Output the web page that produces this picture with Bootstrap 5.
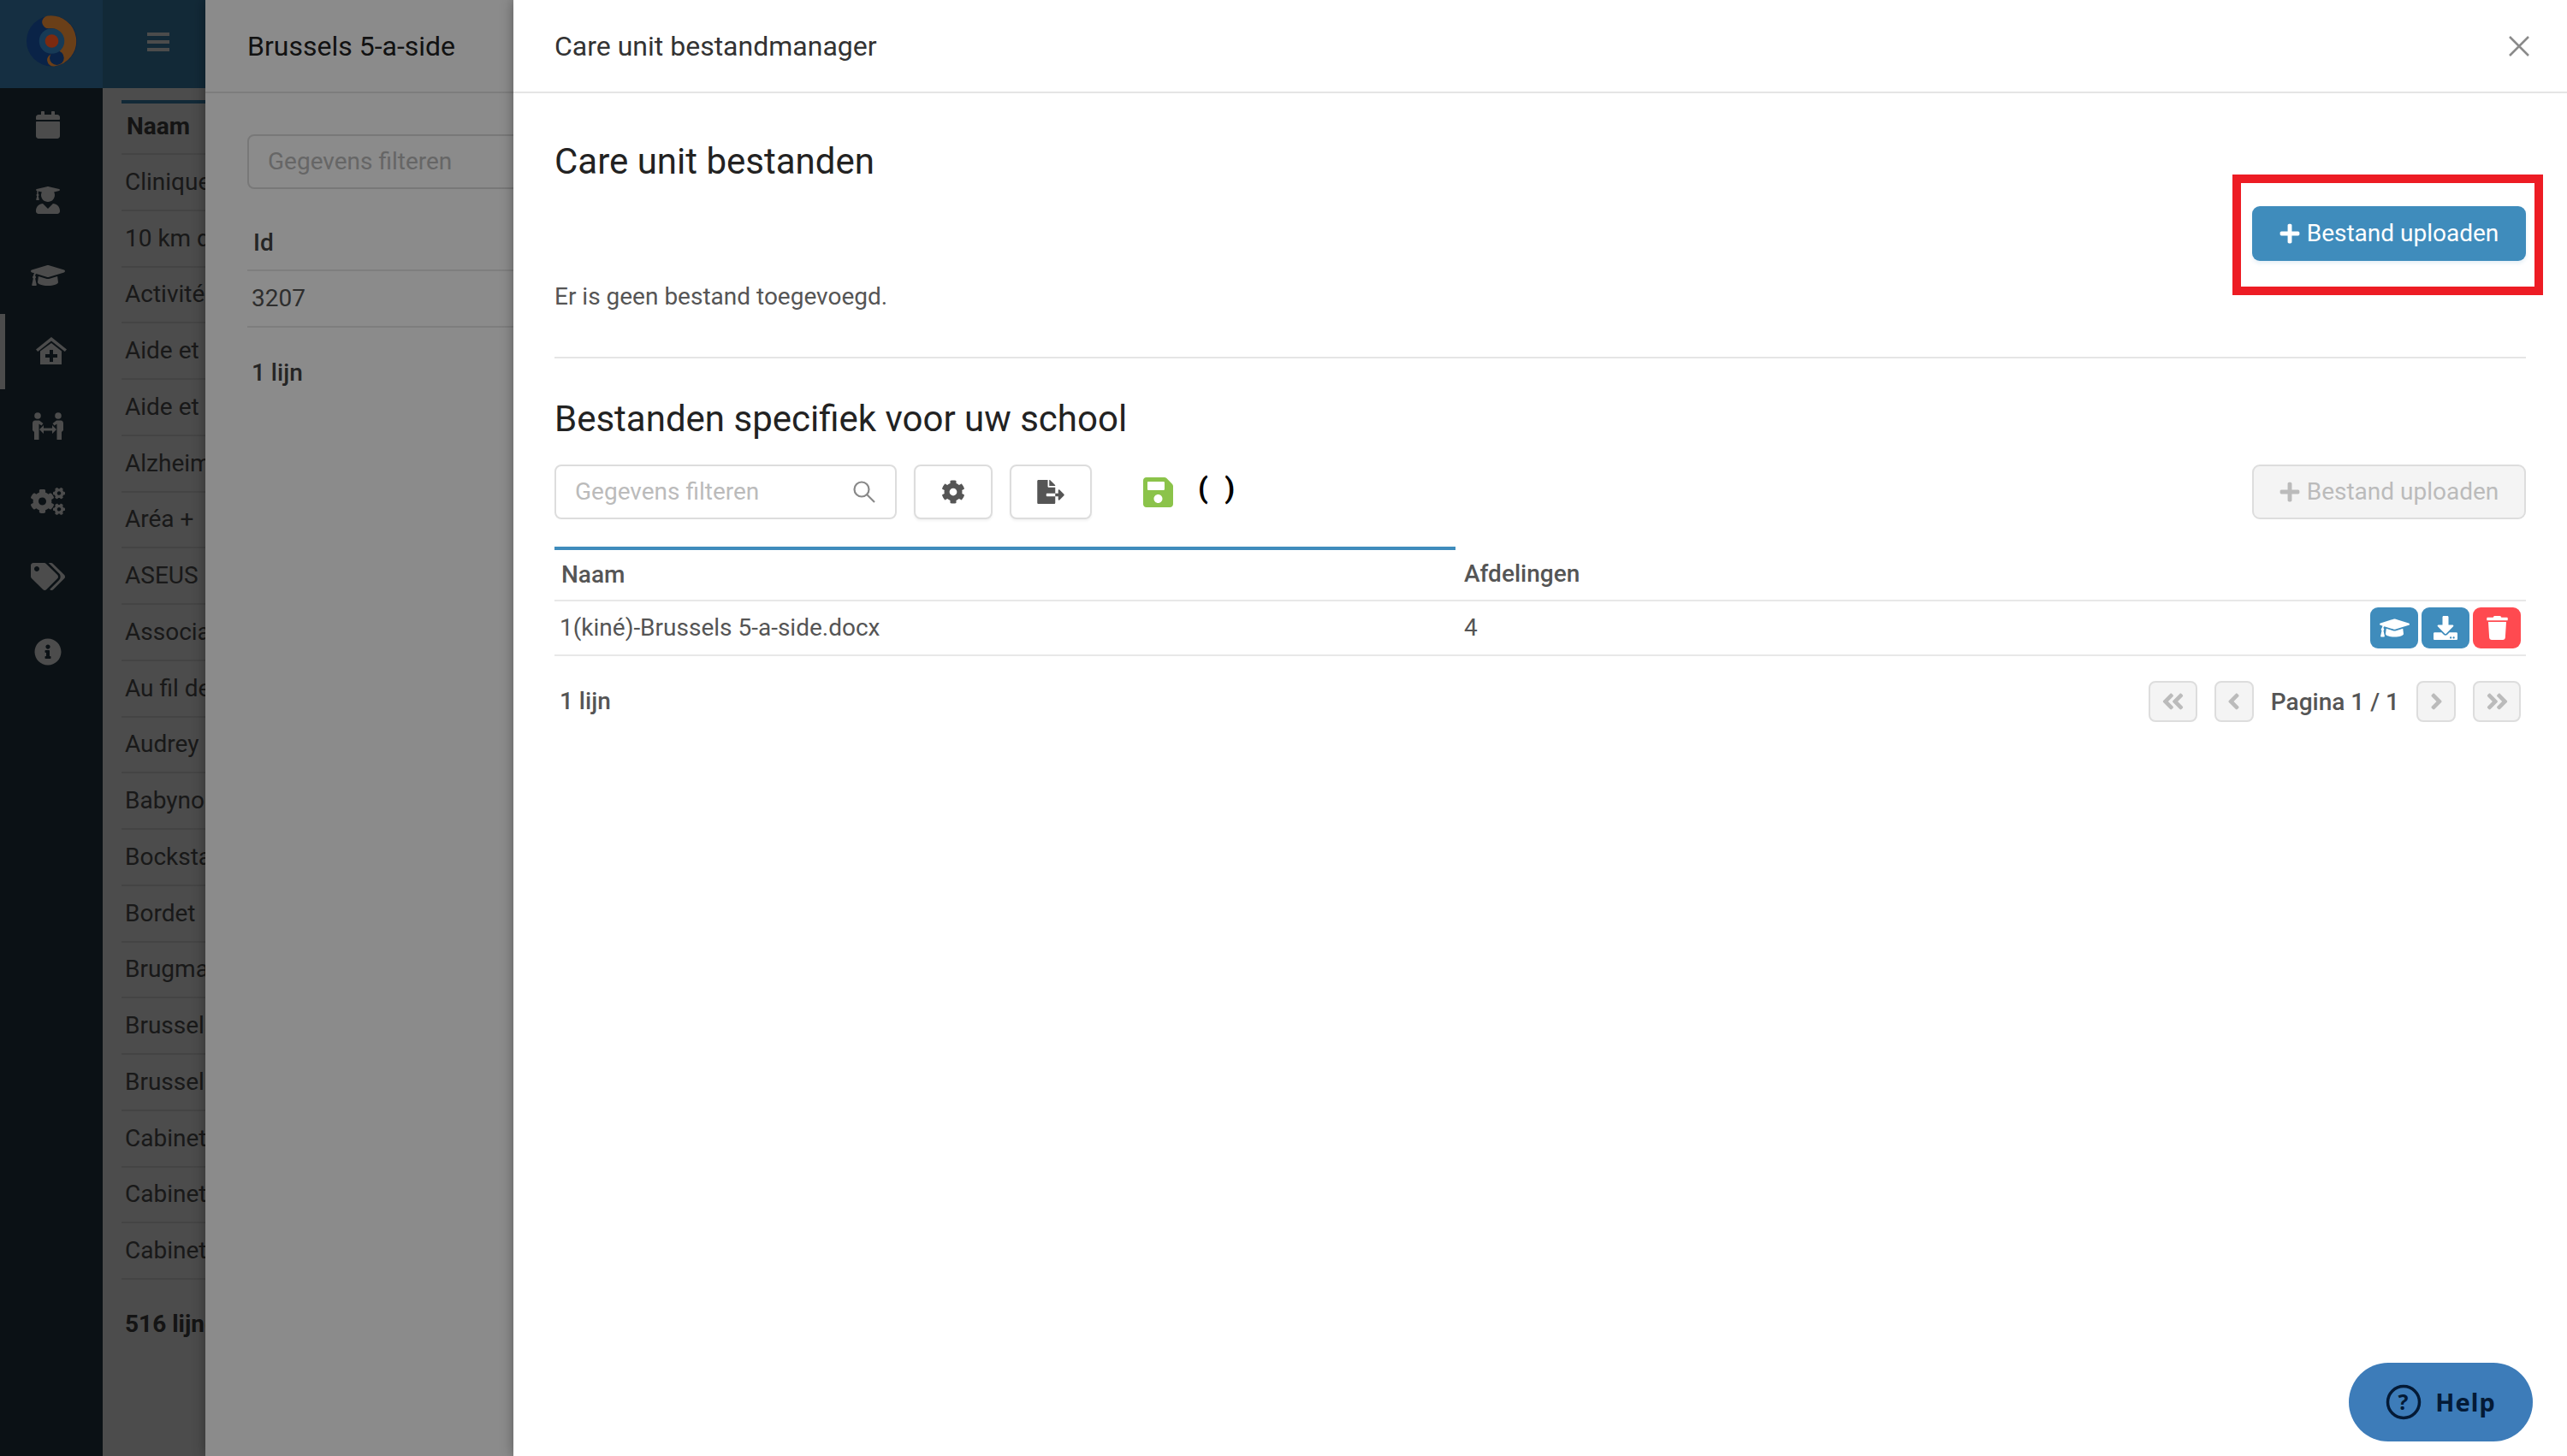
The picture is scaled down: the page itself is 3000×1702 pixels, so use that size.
<!DOCTYPE html>
<html lang="nl">
<head>
<meta charset="utf-8">
<title>Care unit bestandmanager</title>
<link href="https://cdn.jsdelivr.net/npm/bootstrap@5.3.0/dist/css/bootstrap.min.css" rel="stylesheet">
<script src="https://cdn.jsdelivr.net/npm/bootstrap@5.3.0/dist/js/bootstrap.bundle.min.js"></script>
<style>
html,body{height:100%;margin:0;overflow:hidden}
body{font-family:Roboto,"Liberation Sans",sans-serif;font-size:28px;color:#555;background:#fff}
.stage{position:relative;width:3000px;height:1702px;overflow:hidden}
.ico{fill:currentColor;display:block}
.topbar-brand{width:120px;height:103px;background:#152f42;position:relative;z-index:1;padding:0 30px 7px 31px}
.topbar-rest{height:103px;background:#3f8cbc;color:#fff;padding:0 0 5px 52px}
.rail{width:120px;background:#283c49;color:#fff;position:relative}
.rail-item{height:88px;color:#fff}
.rail-slot{width:112px}
.rail-active{position:absolute;left:0;top:264px;width:6px;height:88px;background:#fff}
.rail-list{margin-top:-1px}
.back-table{margin:14px 0 0 22px;width:700px}
.back-head{border-top:4px solid #3f8cbc;height:64px;font-weight:700;color:#444;font-size:28px;padding:0 0 4px 6px;border-bottom:2px solid #e8e8e8}
.back-row{height:65.75px;padding-left:4px;border-bottom:2px solid #e8e8e8;white-space:nowrap}
.back-foot{font-weight:700;padding:31px 0 0 4px;color:#444}
.veil{position:absolute;inset:0;background:rgba(0,0,0,.455)}
.drawer{position:absolute;top:0;bottom:0;left:240px;right:0;background:#fff;box-shadow:0 0 14px rgba(0,0,0,.35)}
.dialog{position:absolute;top:0;bottom:0;left:600px;right:0;background:#fff;box-shadow:0 0 14px rgba(0,0,0,.35)}
.drawer-head{height:109px;padding-left:49px;border-bottom:2px solid #e5e5e5;font-size:32px;color:#222}
.drawer-body{padding:48px 48px 0 49px}
.filter-box{height:64px;border:2px solid #ddd;border-radius:8px;padding:0 22px;color:#bbb;font-size:28px;background:#fff}
.drawer-id{height:96px;border-bottom:2px solid #e8e8e8;padding:0 0 10px 7px;font-weight:500;color:#444}
.drawer-val{height:66px;border-bottom:2px solid #e8e8e8;padding-left:5px}
.drawer-foot{font-weight:500;padding:32px 0 0 5px;color:#444}
.dialog-head{height:109px;padding:0 44px 0 48px;border-bottom:2px solid #e5e5e5;font-size:32px;color:#333}
.dialog-close{background:none;border:0;padding:0;color:#8a8a8a;line-height:0}
.dialog-body{padding:0 48px}
.sec-title{font-size:42px;color:#222;font-weight:400;line-height:48px;margin:0}
.first-block{height:310px;border-bottom:2px solid #e5e5e5;position:relative}
.first-title{padding-top:56px}
.first-action{justify-content:flex-end;margin-top:28px;height:64px}
.first-note{margin-top:24px;line-height:36px;color:#555}
.upload-btn{width:320px;height:64px;background:#3f8cbc;border:0;border-radius:9px;color:#fff;font-size:28px;padding:0;box-shadow:0 3px 4px rgba(63,140,188,.12)}
.upload-btn:disabled{background:#f4f4f4;border:2px solid #ddd;color:#bbb;opacity:1;box-shadow:none}
.callout{position:absolute;left:1961px;top:95px;width:363px;height:141px;border:10px solid #ed1c24;pointer-events:none}
.second-title{padding-top:47px}
.tools{margin-top:29px;height:64px}
.filter-wide{width:400px}
.tool-btn{height:64px;border:2px solid #ddd;border-radius:8px;background:#fff;color:#555;padding:0;box-shadow:0 2px 3px rgba(0,0,0,.05)}
.tool-gear{width:92px;margin-left:20px}
.tool-file{width:96px;margin-left:20px}
.save-ico{color:#8bc34a;margin-left:60px}
.paren-txt{font-size:34px;font-weight:700;color:#000;margin-left:29px;word-spacing:11px;line-height:1;margin-top:-10px}
.files{margin:32px 0 0;width:100%;table-layout:fixed;border-collapse:collapse}
.files th{height:61px;border-top:4px solid #3f8cbc;border-bottom:2px solid #e8e8e8;font-weight:500;color:#555;padding:0 0 0 8px;background:none;box-shadow:none;vertical-align:middle}
.files th+th{border-top:0;padding-left:10px}
.files td{height:64px;border-bottom:2px solid #e8e8e8;color:#555;padding:0 0 0 6px;background:none;box-shadow:none;vertical-align:middle}
.files td+td{padding-left:10px}
.files td.acts{padding:0 6px 0 0}
.act-btn{width:56px;height:48px;border:0;border-radius:9px;background:#3f8cbc;color:#fff;padding:0}
.act-del{background:#ff4a50}
.table-foot{margin-top:29px;height:48px;padding:0 6px}
.count-txt{font-weight:500;color:#555}
.pg-btn{height:48px;border:2px solid #ddd;border-radius:8px;background:#f4f4f4;color:#bbb;padding:0}
.pg-btn:disabled{background:#f4f4f4;border-color:#ddd;color:#bbb;opacity:1}
.pg-w1{width:57px;margin-right:20px}
.pg-w2{width:46px}
.pg-w2b{width:46px;margin-right:20px}
.pg-w3{width:56px}
.pg-label{font-size:28px;font-weight:500;color:#555;margin:2px 20px 0 20px;white-space:nowrap}
.help-pill{position:absolute;left:2745px;top:1593px;width:215px;height:92px;border-radius:46px;background:#3d7cb9;color:#041a36;font-family:"Noto Sans",sans-serif;font-weight:700;font-size:29px;letter-spacing:1px}
.help-pill svg{margin-right:16px;fill:currentColor}
</style>
</head>
<body>
<div class="stage">
  <div class="d-flex flex-column h-100">
    <div class="d-flex">
      <div class="topbar-brand d-flex align-items-center justify-content-center">
        <svg width="59" height="60" viewBox="0 0 60 60"><circle cx="30" cy="30" r="30" fill="#0a2347"/><path d="M26 7.500A22.500 22.500 0 1 1 32 52.500" fill="none" stroke="#6a3f18" stroke-width="15" stroke-linecap="round"/><circle cx="36" cy="50" r="8.500" fill="#0a2347"/><circle cx="30" cy="30" r="15" fill="#173a56"/><circle cx="30" cy="30" r="8" fill="#7c2a10"/></svg>
      </div>
      <div class="topbar-rest flex-grow-1 d-flex align-items-center">
        <svg width="26" height="22" viewBox="0 0 26 22" class="ico"><rect width="26" height="4"/><rect y="9" width="26" height="4"/><rect y="18" width="26" height="4"/></svg>
      </div>
    </div>
    <div class="d-flex flex-grow-1">
      <nav class="rail">
        <div class="rail-active"></div>
        <div class="rail-list">
          <div class="rail-item rail-slot d-flex align-items-center justify-content-center"><svg class="ico" width="28" height="32" viewBox="0 0 448 512"><path d="M12 192h424c6.6 0 12 5.4 12 12v260c0 26.5-21.5 48-48 48H48c-26.5 0-48-21.5-48-48V204c0-6.6 5.4-12 12-12zm436-44v-36c0-26.5-21.5-48-48-48h-48V12c0-6.6-5.4-12-12-12h-40c-6.6 0-12 5.4-12 12v52H160V12c0-6.6-5.4-12-12-12h-40c-6.6 0-12 5.4-12 12v52H48C21.5 64 0 85.5 0 112v36c0 6.6 5.4 12 12 12h424c6.6 0 12-5.4 12-12z"/></svg></div>
          <div class="rail-item rail-slot d-flex align-items-center justify-content-center"><svg class="ico" width="28" height="32" viewBox="0 0 448 512"><path d="M319.4 320.6L224 416l-95.4-95.4C57.1 323.7 0 382.2 0 454.4v9.6c0 26.5 21.5 48 48 48h352c26.5 0 48-21.5 48-48v-9.6c0-72.2-57.1-130.7-128.6-133.8zM13.6 79.8l6.4 1.5v58.4c-7 4.2-12 11.5-12 20.3 0 8.4 4.6 15.4 11.1 19.7L3.5 242c-1.7 6.9 2.1 14 7.6 14h41.8c5.5 0 9.3-7.1 7.6-14l-15.6-62.3C51.4 175.4 56 168.4 56 160c0-8.8-5-16.1-12-20.3V87.1l66 15.9c-8.6 17.2-14 36.4-14 57 0 70.7 57.3 128 128 128s128-57.3 128-128c0-20.6-5.3-39.8-14-57l96.3-23.2c18.2-4.4 18.2-27.1 0-31.5l-190.4-46c-13-3.1-26.7-3.1-39.7 0L13.6 48.2c-18.1 4.4-18.1 27.2 0 31.6z"/></svg></div>
          <div class="rail-item rail-slot d-flex align-items-center justify-content-center"><svg class="ico" width="40" height="32" viewBox="0 0 640 512"><path d="M622.34 153.2L343.4 67.5c-15.2-4.67-31.6-4.67-46.79 0L17.66 153.2c-23.54 7.23-23.54 38.36 0 45.59l48.63 14.94c-10.67 13.19-17.23 29.28-17.88 46.9C38.78 266.15 32 276.11 32 288c0 10.78 5.68 19.85 13.86 25.65L20.33 428.53C18.11 438.52 25.71 448 35.94 448h56.11c10.24 0 17.84-9.48 15.62-19.47L82.14 313.65C90.32 307.85 96 298.78 96 288c0-11.57-6.47-21.25-15.66-26.87.76-15.02 8.44-28.3 20.69-36.72L296.6 284.5c9.06 2.78 26.44 6.25 46.79 0l278.95-85.7c23.55-7.24 23.55-38.36 0-45.6zM352.79 315.09c-28.53 8.76-52.84 3.92-65.59 0l-145.02-44.55L128 384c0 35.35 85.96 64 192 64s192-28.65 192-64l-14.18-113.47-145.03 44.56z"/></svg></div>
          <div class="rail-item d-flex align-items-center justify-content-center"><svg class="ico" width="36" height="32" viewBox="0 0 36 32"><path d="M18 0L36 14.500 33.800 17 18 4.600 2.200 17 0 14.500z"/><path d="M18 7L30 16.500V32H5V16.500zM16 15v5h-5v4h5v5h4v-5h5v-4h-5v-5z" fill-rule="evenodd"/></svg></div>
          <div class="rail-item rail-slot d-flex align-items-center justify-content-center"><svg class="ico" width="36" height="32" viewBox="0 0 36 32"><circle cx="6" cy="4" r="3.800"/><circle cx="30" cy="4" r="3.800"/><path d="M3 9.500h5l4.500 3.500-2 2.500-3-2V32H2V23L0 21v-8a3.500 3.500 0 0 1 3-3.500z"/><path d="M33 9.500h-5l-4.500 3.500 2 2.500 3-2V32h5.500V23l2-2v-8a3.500 3.500 0 0 0-3-3.500z"/><path d="M8 20l5-5v3.500h10V15l5 5-5 5v-3.500H13V25z"/></svg></div>
          <div class="rail-item rail-slot d-flex align-items-center justify-content-center"><svg class="ico" width="40" height="32" viewBox="0 0 640 512"><path d="M512.100 191l-8.200 14.300c-3 5.300-9.400 7.500-15.100 5.400-11.800-4.400-22.600-10.700-32.100-18.600-4.600-3.800-5.800-10.500-2.800-15.700l8.200-14.300c-6.900-8-12.300-17.300-15.900-27.400h-16.500c-6 0-11.200-4.300-12.200-10.300-2-12-2.100-24.600 0-37.100 1-6 6.200-10.400 12.200-10.400h16.500c3.600-10.100 9-19.400 15.900-27.400l-8.200-14.300c-3-5.200-1.900-11.900 2.800-15.700 9.500-7.900 20.400-14.200 32.100-18.600 5.700-2.100 12.100.1 15.100 5.400l8.200 14.300c10.500-1.900 21.200-1.900 31.700 0L552 6.300c3-5.300 9.400-7.500 15.100-5.400 11.800 4.400 22.600 10.700 32.100 18.600 4.600 3.800 5.800 10.500 2.800 15.700l-8.200 14.300c6.900 8 12.300 17.300 15.900 27.400h16.500c6 0 11.200 4.300 12.200 10.300 2 12 2.100 24.600 0 37.100-1 6-6.200 10.400-12.200 10.400h-16.500c-3.600 10.100-9 19.400-15.900 27.400l8.200 14.300c3 5.200 1.900 11.900-2.800 15.700-9.500 7.900-20.400 14.200-32.100 18.600-5.700 2.100-12.100-.1-15.100-5.400l-8.200-14.300c-10.400 1.900-21.200 1.900-31.700 0zm-10.500-58.800c38.500 29.600 82.400-14.300 52.800-52.800-38.500-29.700-82.400 14.300-52.800 52.800zM386.300 286.100l33.700 16.800c10.100 5.800 14.500 18.100 10.500 29.100-8.900 24.200-26.400 46.400-42.600 65.800-7.400 8.900-20.200 11.100-30.300 5.300l-29.100-16.800c-16 13.700-34.600 24.600-54.900 31.700v33.600c0 11.600-8.300 21.600-19.700 23.600-24.600 4.200-50.400 4.400-75.900 0-11.500-2-20-11.900-20-23.600V418c-20.300-7.200-38.900-18-54.900-31.700L74 403c-10 5.800-22.900 3.600-30.300-5.300-16.200-19.400-33.300-41.600-42.200-65.700-4-10.900.4-23.200 10.500-29.100l33.300-16.800c-3.900-20.900-3.900-42.400 0-63.400L12 205.800c-10.100-5.800-14.600-18.100-10.500-29 8.900-24.200 26-46.400 42.200-65.800 7.400-8.900 20.200-11.100 30.300-5.300l29.100 16.800c16-13.700 34.600-24.600 54.900-31.700V57.100c0-11.500 8.200-21.500 19.600-23.500 24.600-4.200 50.500-4.400 76-.1 11.500 2 20 11.900 20 23.600v33.600c20.300 7.200 38.900 18 54.900 31.700l29.100-16.800c10-5.800 22.900-3.600 30.300 5.300 16.200 19.400 33.200 41.600 42.100 65.800 4 10.900.1 23.200-10 29.100l-33.700 16.800c3.900 21 3.900 42.500 0 63.500zm-117.600 21.100c59.200-77-28.700-164.900-105.700-105.700-59.200 77 28.700 164.900 105.700 105.700zm243.400 182.700l-8.200 14.300c-3 5.300-9.400 7.500-15.100 5.400-11.800-4.400-22.600-10.700-32.100-18.600-4.600-3.800-5.800-10.500-2.800-15.700l8.200-14.300c-6.900-8-12.300-17.300-15.900-27.400h-16.500c-6 0-11.200-4.300-12.200-10.300-2-12-2.100-24.600 0-37.100 1-6 6.200-10.400 12.200-10.400h16.500c3.600-10.100 9-19.400 15.900-27.400l-8.200-14.300c-3-5.200-1.900-11.900 2.800-15.700 9.500-7.900 20.400-14.200 32.100-18.600 5.700-2.100 12.100.1 15.100 5.400l8.200 14.300c10.500-1.900 21.200-1.900 31.700 0l8.200-14.300c3-5.300 9.400-7.500 15.100-5.400 11.800 4.400 22.600 10.700 32.100 18.600 4.600 3.800 5.800 10.500 2.800 15.700l-8.200 14.300c6.900 8 12.300 17.300 15.900 27.400h16.500c6 0 11.200 4.300 12.200 10.300 2 12 2.100 24.600 0 37.100-1 6-6.200 10.400-12.200 10.400h-16.500c-3.600 10.100-9 19.400-15.900 27.400l8.200 14.300c3 5.200 1.900 11.900-2.800 15.700-9.500 7.900-20.400 14.200-32.100 18.600-5.700 2.100-12.100-.1-15.100-5.400l-8.200-14.300c-10.400 1.900-21.200 1.900-31.700 0zM501.600 431c38.500 29.600 82.400-14.300 52.800-52.800-38.500-29.600-82.400 14.300-52.800 52.800z"/></svg></div>
          <div class="rail-item rail-slot d-flex align-items-center justify-content-center"><svg class="ico" width="40" height="32" viewBox="0 0 640 512"><path d="M497.941 225.941L286.059 14.059A48 48 0 0 0 252.118 0H48C21.49 0 0 21.49 0 48v204.118a48 48 0 0 0 14.059 33.941l211.882 211.882c18.744 18.745 49.136 18.746 67.882 0l204.118-204.118c18.745-18.745 18.745-49.137 0-67.882zM112 160c-26.51 0-48-21.49-48-48s21.49-48 48-48 48 21.49 48 48-21.49 48-48 48zm513.941 133.823L421.823 497.941c-18.745 18.745-49.137 18.745-67.882 0l-.36-.36L527.64 323.522c16.999-16.999 26.36-39.6 26.36-63.64s-9.362-46.641-26.36-63.64L331.397 0h48.721a48 48 0 0 1 33.941 14.059l211.882 211.882c18.745 18.745 18.745 49.137 0 67.882z"/></svg></div>
          <div class="rail-item rail-slot d-flex align-items-center justify-content-center"><svg class="ico" width="32" height="32" viewBox="0 0 512 512"><path d="M256 8C119.043 8 8 119.083 8 256c0 136.997 111.043 248 248 248s248-111.003 248-248C504 119.083 392.957 8 256 8zm0 110c23.196 0 42 18.804 42 42s-18.804 42-42 42-42-18.804-42-42 18.804-42 42-42zm56 254c0 6.627-5.373 12-12 12h-88c-6.627 0-12-5.373-12-12v-24c0-6.627 5.373-12 12-12h12v-64h-12c-6.627 0-12-5.373-12-12v-24c0-6.627 5.373-12 12-12h64c6.627 0 12 5.373 12 12v100h12c6.627 0 12 5.373 12 12v24z"/></svg></div>
        </div>
      </nav>
      <main class="flex-grow-1">
        <div class="back-table">
          <div class="back-head d-flex align-items-center">Naam</div>
          <div class="back-row d-flex align-items-center">Clinique</div>
          <div class="back-row d-flex align-items-center">10 km de</div>
          <div class="back-row d-flex align-items-center">Activité</div>
          <div class="back-row d-flex align-items-center">Aide et soins</div>
          <div class="back-row d-flex align-items-center">Aide et soins</div>
          <div class="back-row d-flex align-items-center">Alzheimer</div>
          <div class="back-row d-flex align-items-center">Aréa +</div>
          <div class="back-row d-flex align-items-center">ASEUS</div>
          <div class="back-row d-flex align-items-center">Association</div>
          <div class="back-row d-flex align-items-center">Au fil de</div>
          <div class="back-row d-flex align-items-center">Audrey</div>
          <div class="back-row d-flex align-items-center">Babynoo</div>
          <div class="back-row d-flex align-items-center">Bockstael</div>
          <div class="back-row d-flex align-items-center">Bordet</div>
          <div class="back-row d-flex align-items-center">Brugmann</div>
          <div class="back-row d-flex align-items-center">Brussels</div>
          <div class="back-row d-flex align-items-center">Brussels</div>
          <div class="back-row d-flex align-items-center">Cabinet</div>
          <div class="back-row d-flex align-items-center">Cabinet</div>
          <div class="back-row d-flex align-items-center">Cabinet</div>
          <div class="back-foot">516 lijnen</div>
        </div>
      </main>
    </div>
  </div>

  <div class="veil"></div>

  <aside class="drawer">
    <div class="drawer-head d-flex align-items-center">Brussels 5-a-side</div>
    <div class="drawer-body">
      <div class="filter-box d-flex align-items-center">Gegevens filteren</div>
      <div class="drawer-id d-flex align-items-end">Id</div>
      <div class="drawer-val d-flex align-items-center">3207</div>
      <div class="drawer-foot">1 lijn</div>
    </div>
  </aside>

  <div class="veil"></div>

  <section class="dialog">
    <header class="dialog-head d-flex align-items-center justify-content-between">
      <span>Care unit bestandmanager</span>
      <button class="dialog-close" aria-label="Sluiten"><svg width="24" height="24" viewBox="0 0 24 24"><path d="M1 1l22 22M23 1L1 23" stroke="currentColor" stroke-width="2.500" fill="none"/></svg></button>
    </header>
    <div class="dialog-body">
      <div class="first-block">
        <h2 class="sec-title first-title">Care unit bestanden</h2>
        <div class="d-flex first-action">
          <button class="btn upload-btn d-flex align-items-center justify-content-center gap-2"><svg class="ico" width="24" height="26" viewBox="0 0 448 512"><path d="M416 208H272V64c0-17.670-14.330-32-32-32h-32c-17.670 0-32 14.330-32 32v144H32c-17.670 0-32 14.330-32 32v32c0 17.670 14.330 32 32 32h144v144c0 17.670 14.330 32 32 32h32c17.670 0 32-14.330 32-32V304h144c17.670 0 32-14.330 32-32v-32c0-17.670-14.330-32-32-32z"/></svg>Bestand uploaden</button>
        </div>
        <p class="first-note mb-0">Er is geen bestand toegevoegd.</p>
        <div class="callout"></div>
      </div>
      <h2 class="sec-title second-title">Bestanden specifiek voor uw school</h2>
      <div class="d-flex align-items-center tools">
        <div class="filter-box filter-wide d-flex align-items-center justify-content-between">
          <span>Gegevens filteren</span>
          <svg width="28" height="28" viewBox="0 0 28 28" fill="none" stroke="#888" stroke-width="2.200"><circle cx="11" cy="11" r="8.500"/><path d="M17 17l9 9"/></svg>
        </div>
        <button class="btn tool-btn tool-gear d-flex align-items-center justify-content-center"><svg class="ico" width="28" height="28" viewBox="0 0 512 512"><path d="M487.400 315.700l-42.600-24.600c4.300-23.200 4.300-47 0-70.200l42.600-24.600c4.900-2.800 7.100-8.600 5.500-14-11.100-35.600-30-67.800-54.700-94.600-3.800-4.100-10-5.100-14.800-2.300L380.800 110c-17.900-15.400-38.500-27.300-60.800-35.100V25.800c0-5.600-3.900-10.500-9.400-11.700-36.700-8.200-74.300-7.800-109.200 0-5.500 1.200-9.400 6.100-9.400 11.700V75c-22.200 7.900-42.800 19.800-60.800 35.100L88.700 85.500c-4.900-2.800-11-1.900-14.800 2.300-24.700 26.700-43.600 58.900-54.700 94.600-1.700 5.400.6 11.200 5.500 14L67.300 221c-4.300 23.200-4.300 47 0 70.200l-42.600 24.600c-4.900 2.800-7.100 8.600-5.500 14 11.100 35.600 30 67.800 54.700 94.600 3.800 4.100 10 5.100 14.800 2.300l42.600-24.600c17.900 15.400 38.500 27.300 60.800 35.100v49.200c0 5.600 3.900 10.500 9.400 11.700 36.700 8.200 74.300 7.800 109.200 0 5.500-1.200 9.400-6.100 9.400-11.700v-49.200c22.200-7.900 42.800-19.800 60.800-35.100l42.600 24.600c4.900 2.800 11 1.900 14.800-2.300 24.700-26.700 43.600-58.900 54.700-94.600 1.500-5.500-.7-11.300-5.600-14.100zM256 336c-44.100 0-80-35.900-80-80s35.900-80 80-80 80 35.900 80 80-35.900 80-80 80z"/></svg></button>
        <button class="btn tool-btn tool-file d-flex align-items-center justify-content-center"><svg class="ico" width="32" height="28" viewBox="0 0 576 512"><path d="M384 121.900c0-6.300-2.500-12.400-7-16.900L279.100 7c-4.500-4.500-10.600-7-17-7H256v128h128zM571 308l-95.700-96.400c-10.100-10.100-27.400-3-27.400 11.300V288h-64v64h64v65.200c0 14.300 17.300 21.400 27.400 11.300L571 332c6.600-6.600 6.600-17.400 0-24zm-379 28v-32c0-8.800 7.200-16 16-16h176V160H248c-13.200 0-24-10.800-24-24V0H24C10.700 0 0 10.700 0 24v464c0 13.300 10.700 24 24 24h336c13.300 0 24-10.700 24-24V352H208c-8.800 0-16-7.200-16-16z"/></svg></button>
        <span class="save-ico"><svg class="ico" width="35" height="39" viewBox="0 32 448 448"><path d="M433.941 129.941l-83.882-83.882A48 48 0 0 0 316.118 32H48C21.490 32 0 53.490 0 80v352c0 26.510 21.490 48 48 48h352c26.510 0 48-21.490 48-48V163.882a48 48 0 0 0-14.059-33.941zM224 416c-35.346 0-64-28.654-64-64 0-35.346 28.654-64 64-64s64 28.654 64 64c0 35.346-28.654 64-64 64zm96-304.520V212c0 6.627-5.373 12-12 12H76c-6.627 0-12-5.373-12-12V108c0-6.627 5.373-12 12-12h228.520c3.183 0 6.235 1.264 8.485 3.515l3.480 3.480A11.996 11.996 0 0 1 320 111.480z"/></svg></span>
        <span class="paren-txt">( )</span>
        <button class="btn upload-btn ms-auto d-flex align-items-center justify-content-center gap-2" disabled><svg class="ico" width="24" height="26" viewBox="0 0 448 512"><path d="M416 208H272V64c0-17.670-14.330-32-32-32h-32c-17.670 0-32 14.330-32 32v144H32c-17.670 0-32 14.330-32 32v32c0 17.670 14.330 32 32 32h144v144c0 17.670 14.330 32 32 32h32c17.670 0 32-14.330 32-32V304h144c17.670 0 32-14.330 32-32v-32c0-17.670-14.330-32-32-32z"/></svg>Bestand uploaden</button>
      </div>
      <table class="table files mb-0">
        <colgroup><col style="width:1053px"><col style="width:800px"><col></colgroup>
        <thead><tr><th>Naam</th><th>Afdelingen</th><th></th></tr></thead>
        <tbody>
          <tr>
            <td>1(kiné)-Brussels 5-a-side.docx</td>
            <td>4</td>
            <td class="acts">
              <div class="d-flex justify-content-end gap-1">
                <button class="btn act-btn d-flex align-items-center justify-content-center"><svg class="ico" width="35" height="28" viewBox="0 0 640 512"><path d="M622.340 153.200L343.400 67.500c-15.200-4.670-31.600-4.670-46.790 0L17.660 153.200c-23.540 7.230-23.540 38.360 0 45.590l48.630 14.940c-10.670 13.190-17.230 29.280-17.880 46.900C38.780 266.150 32 276.110 32 288c0 10.780 5.680 19.850 13.860 25.650L20.330 428.530C18.110 438.520 25.710 448 35.940 448h56.110c10.240 0 17.840-9.480 15.620-19.470L82.140 313.650C90.320 307.850 96 298.780 96 288c0-11.570-6.470-21.250-15.660-26.870.76-15.020 8.440-28.300 20.690-36.720L296.600 284.500c9.060 2.780 26.440 6.250 46.790 0l278.950-85.700c23.550-7.240 23.550-38.360 0-45.600zM352.790 315.090c-28.530 8.760-52.840 3.920-65.590 0l-145.020-44.550L128 384c0 35.350 85.960 64 192 64s192-28.650 192-64l-14.180-113.470-145.030 44.560z"/></svg></button>
                <button class="btn act-btn d-flex align-items-center justify-content-center"><svg class="ico" width="28" height="28" viewBox="0 0 512 512"><path d="M216 0h80c13.300 0 24 10.700 24 24v168h87.700c17.800 0 26.700 21.500 14.100 34.100L269.700 378.300c-7.500 7.500-19.800 7.500-27.300 0L90.100 226.100c-12.600-12.600-3.700-34.100 14.100-34.100H192V24c0-13.300 10.700-24 24-24zm296 376v112c0 13.300-10.700 24-24 24H24c-13.300 0-24-10.700-24-24V376c0-13.300 10.700-24 24-24h146.700l49 49c20.100 20.100 52.500 20.100 72.600 0l49-49H488c13.300 0 24 10.700 24 24zm-124 88c0-11-9-20-20-20s-20 9-20 20 9 20 20 20 20-9 20-20zm64 0c0-11-9-20-20-20s-20 9-20 20 9 20 20 20 20-9 20-20z"/></svg></button>
                <button class="btn act-btn act-del d-flex align-items-center justify-content-center"><svg class="ico" width="25" height="28" viewBox="0 0 448 512"><path d="M432 32H312l-9.400-18.700A24 24 0 0 0 281.100 0H166.800a23.720 23.720 0 0 0-21.400 13.300L136 32H16A16 16 0 0 0 0 48v32a16 16 0 0 0 16 16h416a16 16 0 0 0 16-16V48a16 16 0 0 0-16-16zM53.200 467a48 48 0 0 0 47.900 45h245.800a48 48 0 0 0 47.900-45L416 128H32z"/></svg></button>
              </div>
            </td>
          </tr>
        </tbody>
      </table>
      <div class="d-flex align-items-center justify-content-between table-foot">
        <span class="count-txt">1 lijn</span>
        <div class="d-flex align-items-center">
          <button class="btn pg-btn pg-w1 d-flex align-items-center justify-content-center" disabled><svg class="ico" width="27" height="30" viewBox="0 0 448 512"><path d="M223.700 239l136-136c9.400-9.400 24.600-9.400 33.900 0l22.600 22.600c9.400 9.400 9.400 24.600 0 33.900L319.900 256l96.400 96.400c9.400 9.400 9.400 24.600 0 33.900L393.700 409c-9.400 9.400-24.600 9.400-33.900 0l-136-136c-9.500-9.400-9.500-24.600-.1-34zm-192 34l136 136c9.400 9.400 24.600 9.400 33.900 0l22.600-22.600c9.400-9.400 9.400-24.600 0-33.900L127.900 256l96.400-96.400c9.400-9.400 9.400-24.600 0-33.900L201.700 103c-9.400-9.400-24.600-9.400-33.900 0l-136 136c-9.500 9.400-9.500 24.600-.1 34z"/></svg></button>
          <button class="btn pg-btn pg-w2 d-flex align-items-center justify-content-center" disabled><svg class="ico" width="15" height="30" viewBox="0 0 256 512"><path d="M31.700 239l136-136c9.400-9.400 24.600-9.400 33.900 0l22.600 22.600c9.400 9.400 9.400 24.600 0 33.900L127.900 256l96.400 96.400c9.400 9.400 9.400 24.600 0 33.900L201.700 409c-9.400 9.400-24.600 9.400-33.900 0l-136-136c-9.500-9.400-9.500-24.600-.1-34z"/></svg></button>
          <span class="pg-label">Pagina 1 / 1</span>
          <button class="btn pg-btn pg-w2b d-flex align-items-center justify-content-center" disabled><svg class="ico" width="15" height="30" viewBox="0 0 256 512"><path d="M224.300 273l-136 136c-9.400 9.400-24.600 9.400-33.900 0l-22.600-22.600c-9.400-9.400-9.400-24.600 0-33.900l96.400-96.400-96.400-96.400c-9.400-9.400-9.400-24.600 0-33.900L54.300 103c9.400-9.400 24.600-9.400 33.900 0l136 136c9.500 9.400 9.500 24.600.1 34z"/></svg></button>
          <button class="btn pg-btn pg-w3 d-flex align-items-center justify-content-center" disabled><svg class="ico" width="27" height="30" viewBox="0 0 448 512"><path d="M224.300 273l-136 136c-9.400 9.400-24.600 9.400-33.900 0l-22.600-22.600c-9.400-9.400-9.400-24.600 0-33.900l96.400-96.400-96.400-96.400c-9.400-9.400-9.400-24.600 0-33.900L54.300 103c9.400-9.400 24.600-9.400 33.900 0l136 136c9.500 9.400 9.500 24.600.1 34zm192-34l-136-136c-9.400-9.400-24.600-9.400-33.900 0l-22.600 22.600c-9.400 9.400-9.400 24.600 0 33.900l96.400 96.400-96.400 96.400c-9.400 9.400-9.400 24.600 0 33.900l22.600 22.600c9.400 9.400 24.600 9.400 33.900 0l136-136c9.400-9.200 9.400-24.400 0-33.800z"/></svg></button>
        </div>
      </div>
    </div>
  </section>

  <div class="help-pill d-flex align-items-center justify-content-center">
    <svg width="42" height="42" viewBox="0 0 42 42"><circle cx="21" cy="21" r="18.500" fill="none" stroke="currentColor" stroke-width="3.500"/><text x="21" y="30" font-size="25" font-weight="700" text-anchor="middle">?</text></svg>Help
  </div>
</div>
</body>
</html>
